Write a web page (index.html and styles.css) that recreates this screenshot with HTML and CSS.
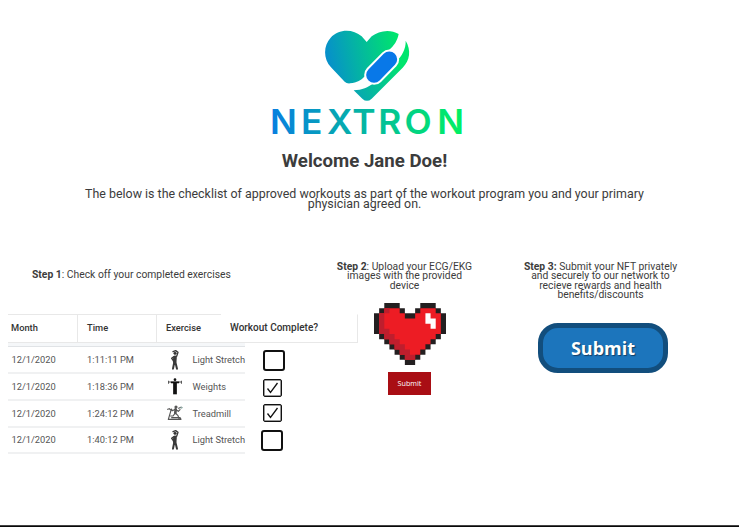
FILE: index.html
```html
<!DOCTYPE html>
<html lang="en">
<head>
<meta charset="utf-8">
<title>Nextron</title>
<link rel="stylesheet" href="styles.css">
</head>
<body>
<svg class="defs" width="0" height="0" aria-hidden="true">
  <defs>
    <symbol id="stretch" viewBox="0 0 30 60">
      <g fill="none" stroke="#3a3a3a" stroke-linecap="round" stroke-linejoin="round">
        <circle cx="15" cy="10" r="4" fill="#333"/>
        <path stroke-width="4" d="M9 5L17 2L24 7L20 19M11 20L5 25L10 32"/>
        <path stroke-width="11" d="M15 22L14 34"/>
        <path stroke-width="6" d="M13 36L9 56M16 36L21 56"/>
      </g>
    </symbol>
    <symbol id="weights" viewBox="0 0 40 50">
      <g fill="none" stroke="#111">
        <circle cx="20" cy="5" r="4" fill="#111" stroke="none"/>
        <path stroke-width="3" d="M1 8V17M39 8V17M1 12H39" stroke="#555"/>
        <path stroke-width="5" d="M8 13H32"/>
        <path stroke-width="11" d="M20 12V48"/>
      </g>
    </symbol>
    <symbol id="treadmill" viewBox="0 0 48 46">
      <g fill="none" stroke="#555" stroke-width="3.5" stroke-linecap="round" stroke-linejoin="round">
        <circle cx="27" cy="5" r="3" fill="#444"/>
        <path stroke-width="8" d="M26 12L25 23"/>
        <path d="M25 12L16 16L13 11M27 13L34 18L39 13M24 24L18 32L11 32M26 24L33 31L36 40M2 12L7 10L12 15L4 42H42L39 37H14M35 9L42 6"/>
        <circle cx="43" cy="7" r="2.5" stroke="#8aa6a0" stroke-width="2"/>
      </g>
    </symbol>
  </defs>
</svg>
<header class="hero">
  <svg class="logo" viewBox="0 0 660 375" role="img" aria-label="Nextron">
    <defs>
      <linearGradient id="heart" gradientUnits="userSpaceOnUse" x1="195" y1="150" x2="420" y2="105">
        <stop offset="0" stop-color="#078bd0"/><stop offset="1" stop-color="#00e56d"/>
      </linearGradient>
      <linearGradient id="low" gradientUnits="userSpaceOnUse" x1="285" y1="230" x2="430" y2="140">
        <stop offset="0" stop-color="#08a5b4"/><stop offset="1" stop-color="#00e56d"/>
      </linearGradient>
      <linearGradient id="word" gradientUnits="userSpaceOnUse" x1="35" y1="0" x2="583" y2="0">
        <stop offset="0" stop-color="#087fdf"/><stop offset="1" stop-color="#00f063"/>
      </linearGradient>
    </defs>
    <path fill="url(#heart)" d="M320 66L305 49C278 25 235 27 212 53C190 77 189 116 213 142L254 185Q260 191 270 190C292 188 303 181 315 168L386 91C403 77 412 62 416 42C390 26 356 32 335 49Z"/>
    <path fill="url(#low)" d="M437 62C454 90 450 121 428 143L335 236Q321 249 307 236L281 211C307 211 324 202 340 190L407 126C426 108 438 87 437 62Z"/>
    <path fill="none" stroke="#fff" stroke-width="59" stroke-linecap="round" d="M342 165L388 118"/>
    <path fill="none" stroke="#0878e8" stroke-width="47" stroke-linecap="round" d="M342 165L388 118"/>
    <text class="wordmark" transform="scale(1.04 1)" x="28.5 118 193 266 341 417 511" y="341" fill="url(#word)">NEXTRON</text>
  </svg>
  <h1>Welcome Jane Doe!</h1>
  <p class="intro">The below is the checklist of approved workouts as part of the workout program you and your primary<br>physician agreed on.</p>
</header>
<main class="steps">
  <section class="step one">
    <p class="caption"><b>Step 1</b>: Check off your completed exercises</p>
    <div class="log">
      <div class="head"><span>Month</span><span>Time</span><span>Exercise</span><span class="complete">Workout Complete?</span></div>
      <div class="band"></div>
      <div class="body">
        <div class="rows">
          <div class="row"><span>12/1/2020</span><span>1:11:11 PM</span><svg class="figure tall"><use href="#stretch"/></svg><span>Light Stretch</span></div>
          <div class="row"><span>12/1/2020</span><span>1:18:36 PM</span><svg class="figure wide"><use href="#weights"/></svg><span>Weights</span></div>
          <div class="row"><span>12/1/2020</span><span>1:24:12 PM</span><svg class="figure run"><use href="#treadmill"/></svg><span>Treadmill</span></div>
          <div class="row"><span>12/1/2020</span><span>1:40:12 PM</span><svg class="figure tall"><use href="#stretch"/></svg><span>Light Stretch</span></div>
        </div>
        <div class="checks">
          <i class="box large"></i>
          <i class="box"><svg viewBox="0 0 19 18"><path d="M4.5 9.5L7.5 13.5L14.5 4"/></svg></i>
          <i class="box third"><svg viewBox="0 0 19 18"><path d="M4.5 9.5L7.5 13.5L14.5 4"/></svg></i>
          <i class="box large last"></i>
        </div>
      </div>
    </div>
  </section>
  <section class="step two">
    <p class="caption"><b>Step 2</b>: Upload your ECG/EKG<br>images with the provided<br>device</p>
    <svg class="pixel-heart" viewBox="0 0 14 12" preserveAspectRatio="none">
      <path fill="#231f20" d="M2 0h3v1h1v1h2v-1h1v-1h3v1h1v1h1v4h-1v1h-1v1h-1v1h-1v1h-1v1h-1v1h-2v-1h-1v-1h-1v-1h-1v-1h-1v-1h-1v-1h-1v-4h1v-1h1z"/>
      <path fill="#ed1c24" d="M2 1h3v1h1v1h2v-1h1v-1h3v1h1v4h-1v1h-1v1h-1v1h-1v1h-1v1h-2v-1h-1v-1h-1v-1h-1v-1h-1v-1h-1v-4h1z"/>
      <path fill="#be1e2d" d="M2 1h1v1h-1v3h1v1h1v1h1v1h1v1h1v1h1v1h-2v-1h-1v-1h-1v-1h-1v-1h-1v-1h-1v-4h1z"/>
      <path fill="#fff" d="M10 2h1v1h1v2h-1v-1h-1z"/>
    </svg>
    <button class="upload">Submit</button>
  </section>
  <section class="step three">
    <p class="caption"><b>Step 3:</b> Submit your NFT privately<br>and securely to our network to<br>recieve rewards and health<br>benefits/discounts</p>
    <button class="send">Submit</button>
  </section>
</main>
<footer class="edge"></footer>
</body>
</html>
```
FILE: styles.css
```css
* { box-sizing: border-box; }
body { margin: 0; width: 739px; height: 527px; overflow: hidden; display: flex; flex-direction: column; background: #fff; color: #3c3c3c; font-family: Roboto, sans-serif; }
.defs { position: absolute; }
.hero { display: flex; flex-direction: column; align-items: center; height: 262px; padding-top: 20px; }
.logo { width: 220px; height: 125px; flex: none; margin-left: 1px; }
.wordmark { font: 600 102px Inter, sans-serif; }
h1 { margin: 5px 10px 0 0; font-size: 18.65px; line-height: 22px; font-weight: 700; }
.intro { margin: 17.3px 10px 0 0; font-size: 12.43px; line-height: 9.33px; text-align: center; white-space: nowrap; }
.steps { display: grid; grid-template-columns: 350px 93px 240px; padding-left: 8px; height: 263px; }
.caption { margin: 0; font-size: 10.33px; line-height: 9.33px; text-align: center; white-space: nowrap; }
.one .caption { margin: 8px 0 0 24px; text-align: left; }
.log { margin-top: 35px; font-size: 9.3px; }
.head { display: grid; grid-template-columns: 70px 79px 64px 137px; height: 28px; font-weight: 500; line-height: 26px; color: #333; white-space: nowrap; }
.head span { border: 1px solid #e8e8e8; border-left: 0; padding-left: 9px; }
.head span:first-child { padding-left: 3px; }
.head span:nth-child(3) { border-right: 0; }
.head .complete { height: 29px; border-top-color: transparent; font-size: 10px; }
.band { width: 237px; height: 5px; background: #f5f7f9; border-bottom: 1px solid #e0e3e6; }
.body { display: flex; }
.rows { width: 237px; color: #555; }
.row { display: grid; grid-template-columns: 75.5px 70px 35.5px 1fr; align-items: center; height: 26.75px; padding-left: 3.5px; border-bottom: 2px solid #f0f1f2; white-space: nowrap; }
.figure { justify-self: center; }
.tall { width: 10px; height: 20px; }
.wide { width: 14px; height: 17px; }
.run { width: 16px; height: 16px; }
.checks { display: flex; flex-direction: column; padding: 3px 0 0 18px; }
.box { width: 19px; height: 18px; margin-top: 8px; border: 1px solid #111; border-radius: 2px; box-shadow: inset 0 0 0 .5px #333; display: grid; }
.box svg { width: 19px; height: 18px; margin: -1px; fill: none; stroke: #111; stroke-width: 1.3; }
.large { width: 22px; height: 21px; margin-top: 0; border-width: 2px; border-radius: 3px; box-shadow: none; }
.third { margin-top: 7px; }
.last { margin: 8px 0 0 -2px; }
.two, .three { display: flex; flex-direction: column; align-items: center; }
.pixel-heart { width: 72px; height: 62px; margin: 13px 0 0 11px; flex: none; }
button { border: 0; padding: 0; color: #fff; font-family: "Open Sans", sans-serif; }
.upload { width: 43px; height: 23px; margin: 7px 0 0 10px; background: #a90e14; font-size: 7.2px; }
.three { width: 180px; margin-left: 59.5px; }
.send { width: 130px; height: 50px; margin: 24px 0 0 5px; border: 5px solid #124e7d; border-radius: 20px; background: #1c75bc; font-size: 18px; font-weight: 700; text-shadow: 1px 1px 1px #123e66; }
.edge { height: 2px; background: #080808; border-top: 1px solid #444; }
```
